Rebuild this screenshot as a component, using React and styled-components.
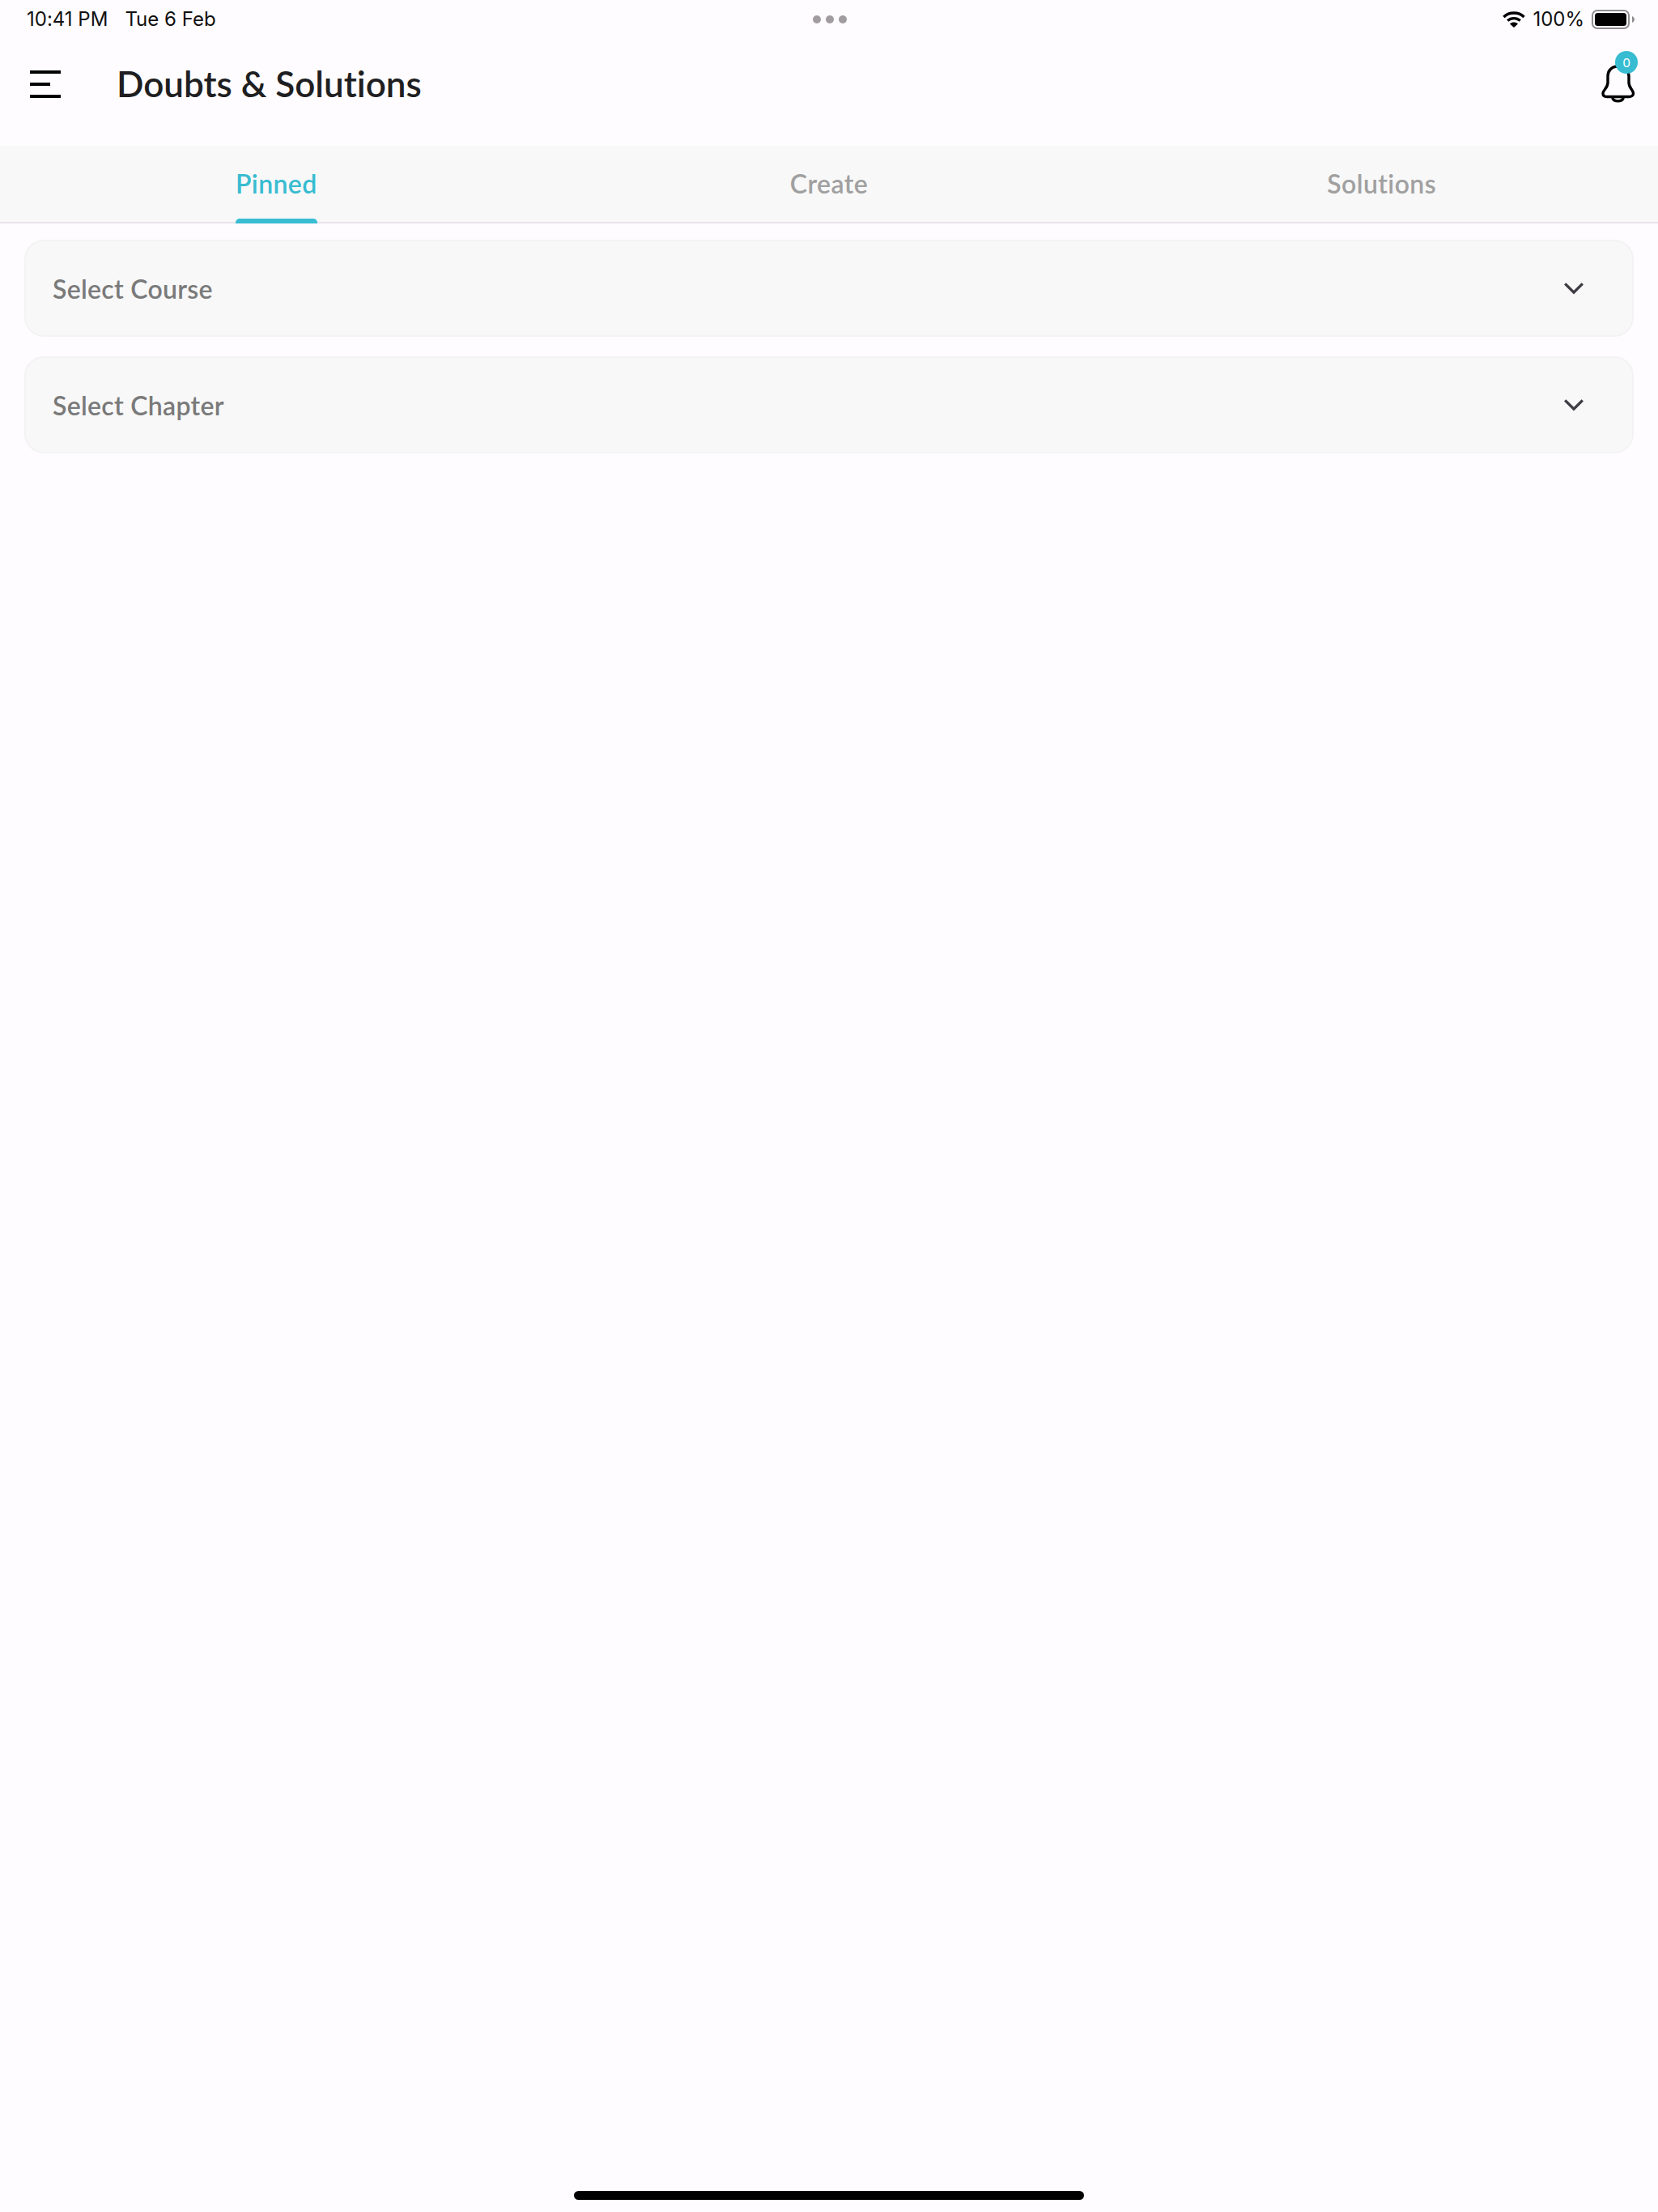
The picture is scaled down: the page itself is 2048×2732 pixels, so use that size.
import React from "react";
import styled, { createGlobalStyle } from "styled-components";

const Global = createGlobalStyle`
  html, body { margin: 0; padding: 0; background: #fefcff; }
  * { box-sizing: border-box; }
`;

const Page = styled.div`
  width: 2048px;
  height: 2732px;
  background: #fefcff;
  display: flex;
  flex-direction: column;
  font-family: Lato, "Noto Sans", sans-serif;
  font-variant-ligatures: none;
`;

const StatusBar = styled.div`
  height: 47px;
  padding: 0 28px 0 33px;
  display: grid;
  grid-template-columns: 1fr auto 1fr;
  align-items: center;
  font-family: Inter, "Liberation Sans", sans-serif;
  font-size: 24px;
  color: #111;
`;

const StatusLeft = styled.div`
  display: flex;
  gap: 21px;
`;

const StatusRight = styled.div`
  display: flex;
  align-items: center;
  justify-content: flex-end;
  gap: 9px;
`;

const Dots = styled.div`
  display: flex;
  gap: 6px;
  margin-right: 4px;
`;

const Dot = styled.span`
  width: 10px;
  height: 10px;
  border-radius: 50%;
  background: #a09ca0;
`;

const Header = styled.header`
  height: 133px;
  padding: 0 27px 19px 37px;
  display: flex;
  align-items: center;
`;

const Burger = styled.div`
  width: 38px;
  height: 34px;
  display: flex;
  flex-direction: column;
  justify-content: space-between;
  margin-right: 69px;
`;

const BurgerBar = styled.span`
  height: 4px;
  width: ${(p) => p.$w}px;
  background: #000;
`;

const Title = styled.h1`
  flex: 1;
  margin: -2px 0 0;
  font-size: 44px;
  font-weight: 600;
  color: #1f1f22;
`;

const BellWrap = styled.div`
  position: relative;
  width: 44px;
  height: 52px;
`;

const Badge = styled.span`
  position: absolute;
  left: 18px;
  top: -15px;
  width: 28px;
  height: 28px;
  border-radius: 50%;
  background: #38bcd1;
  color: #fff;
  font-size: 15px;
  display: flex;
  align-items: center;
  justify-content: center;
`;

const TabBar = styled.nav`
  height: 96px;
  background: #f8f8f8;
  border-bottom: 2px solid #e8e3ec;
  display: grid;
  grid-template-columns: repeat(3, 1fr);
`;

const Tab = styled.div`
  display: flex;
  justify-content: center;
`;

const TabLabel = styled.div`
  position: relative;
  height: 94px;
  padding-bottom: 2px;
  display: flex;
  align-items: center;
  font-size: 32px;
  font-weight: 600;
  letter-spacing: 0.4px;
  color: ${(p) => (p.$active ? "#38bcd1" : "#a0a0a0")};
`;

const Underline = styled.span`
  position: absolute;
  left: 0;
  right: 0;
  bottom: -2px;
  height: 6px;
  border-radius: 5px 5px 0 0;
  background: #38bcd1;
`;

const Form = styled.div`
  padding: 20px 30px 0 30px;
  display: flex;
  flex-direction: column;
  gap: 24px;
`;

const Select = styled.div`
  height: 120px;
  background: #f8f8f8;
  border: 2px solid #f4f3f4;
  border-radius: 24px;
  padding: 0 60px 0 33px;
  display: flex;
  align-items: center;
  justify-content: space-between;
  font-size: 32px;
  font-weight: 600;
  letter-spacing: 0.3px;
  color: #7a7a7a;
`;

const Home = styled.div`
  margin: auto auto 15px;
  width: 630px;
  height: 11px;
  border-radius: 6px;
  background: #000;
`;

const Wifi = () => (
  <svg width="28" height="20" viewBox="0 0 28 20" fill="none" stroke="#000" strokeWidth="3.4">
    <path d="M1.4 7 C8.4 0.4 19.6 0.4 26.6 7" />
    <path d="M6.2 11.6 C10.6 7.6 17.4 7.6 21.8 11.6" />
    <path d="M14 20 L9 15.4 C11.8 13 16.2 13 19 15.4 Z" fill="#000" stroke="none" />
  </svg>
);

const Battery = () => (
  <svg width="54" height="24" viewBox="0 0 54 24">
    <rect x="1" y="1" width="45" height="22" rx="6" fill="none" stroke="#8e8e8e" strokeWidth="2" />
    <rect x="4" y="4" width="39" height="16" rx="3.5" fill="#000" />
    <path d="M50 8 C52 9 53 10.5 53 12 C53 13.5 52 15 50 16 Z" fill="#8e8e8e" />
  </svg>
);

const Bell = () => (
  <svg width="44" height="52" viewBox="0 0 44 52" fill="none" stroke="#000" strokeWidth="3.4" strokeLinejoin="round" strokeLinecap="round">
    <path d="M21.5 4 C13 4 9 10 9 16 L9 24 C9 31 3 33 3 37.5 C3 40 5 41.5 8 41.5 H35 C38 41.5 40.5 40 40.5 37.5 C40.5 33 35 31 35 24 V16 C35 10 30 4 21.5 4 Z" />
    <path d="M15 43.5 C17 48 26 48 28 43.5" />
  </svg>
);

const Chevron = () => (
  <svg width="24" height="16" viewBox="0 0 24 16" fill="none" stroke="#3f3c44" strokeWidth="3.4">
    <path d="M1.2 2.4 L12 13.2 L22.8 2.4" />
  </svg>
);

export default function App() {
  return (
    <Page>
      <Global />
      <StatusBar>
        <StatusLeft>
          <span>10:41 PM</span>
          <span>Tue 6 Feb</span>
        </StatusLeft>
        <Dots>
          <Dot />
          <Dot />
          <Dot />
        </Dots>
        <StatusRight>
          <Wifi />
          <span>100%</span>
          <Battery />
        </StatusRight>
      </StatusBar>
      <Header>
        <Burger>
          <BurgerBar $w={38} />
          <BurgerBar $w={25} />
          <BurgerBar $w={38} />
        </Burger>
        <Title>Doubts &amp; Solutions</Title>
        <BellWrap>
          <Bell />
          <Badge>0</Badge>
        </BellWrap>
      </Header>
      <TabBar>
        <Tab>
          <TabLabel $active>
            Pinned
            <Underline />
          </TabLabel>
        </Tab>
        <Tab>
          <TabLabel>Create</TabLabel>
        </Tab>
        <Tab>
          <TabLabel>Solutions</TabLabel>
        </Tab>
      </TabBar>
      <Form>
        <Select>
          Select Course
          <Chevron />
        </Select>
        <Select>
          Select Chapter
          <Chevron />
        </Select>
      </Form>
      <Home />
    </Page>
  );
}
